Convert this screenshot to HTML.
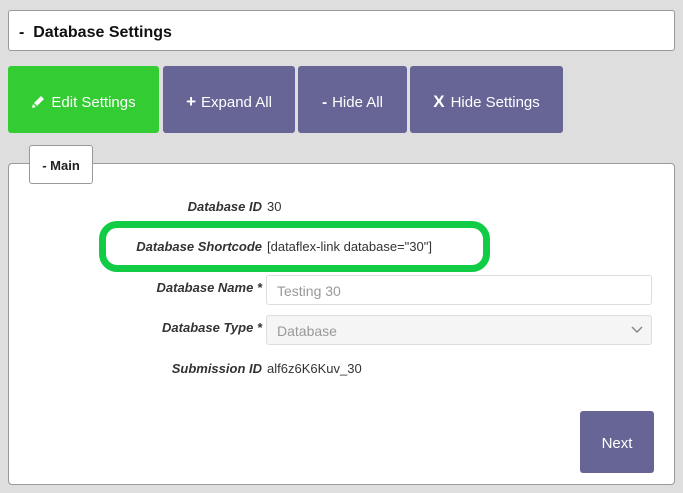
<!DOCTYPE html>
<html><head><style>
*{box-sizing:border-box;margin:0;padding:0}
body{width:683px;height:493px;background:#dedede;font-family:"Liberation Sans",sans-serif;position:relative;overflow:hidden;color:#333}
.a{position:absolute}
.hdr{left:8px;top:10px;width:667px;height:41px;background:#fff;border:1px solid #999;border-radius:3px;font-weight:bold;font-size:16px;color:#111;padding:13px 0 0 10px}
.btn{top:66px;height:67px;color:#fff;font-size:15px;display:flex;align-items:center;justify-content:center;border-radius:3px;background:#666596;padding-top:5px}
.panel{left:8px;top:163px;width:667px;height:322px;background:#fff;border:1px solid #999;border-radius:4px}
.tab{left:29px;top:145px;width:64px;height:39px;background:#fff;border:1px solid #999;border-radius:3px;font-weight:bold;font-size:13px;color:#222;text-align:center;line-height:40px}
.lbl{right:421px;font-weight:bold;font-style:italic;font-size:13px;color:#333;text-align:right;white-space:nowrap}
.val{left:267px;font-size:13px;color:#333;white-space:nowrap}
.inp{left:266px;width:386px;height:30px;border:1px solid #ddd;border-radius:3px;font-size:14px;color:#999;padding:7px 10px}
</style></head><body>
<div class="a hdr">-&nbsp; Database Settings</div>
<div class="a btn" style="left:8px;width:151px;background:#33cc33">
<svg width="16" height="16" viewBox="0 0 16 16" style="margin-right:4px"><path d="M3 9 L10 2 L13 5 L6 12 Z" fill="#fff"/><path d="M2 10 L5 13 L1 14 Z" fill="#fff"/></svg>Edit Settings</div>
<div class="a btn" style="left:163px;width:132px"><b style="margin-right:5px;font-size:17px">+</b>Expand All</div>
<div class="a btn" style="left:298px;width:109px"><b style="margin-right:5px">-</b>Hide All</div>
<div class="a btn" style="left:410px;width:153px"><b style="margin-right:6px;font-size:17px">X</b>Hide Settings</div>
<div class="a panel"></div>
<div class="a tab">- Main</div>
<div class="a lbl" style="top:199px">Database ID</div><div class="a val" style="top:199px">30</div>
<div class="a" style="left:99px;top:221px;width:391px;height:51px;border:7px solid #11cc44;border-radius:18px"></div>
<div class="a lbl" style="top:239px">Database Shortcode</div><div class="a val" style="top:239px">[dataflex-link database="30"]</div>
<div class="a lbl" style="top:280px">Database Name *</div>
<div class="a inp" style="top:275px;background:#fff">Testing 30</div>
<div class="a lbl" style="top:320px">Database Type *</div>
<div class="a inp" style="top:315px;background:#f5f5f5">Database
<svg class="a" style="right:8px;top:10px" width="12" height="8" viewBox="0 0 12 8"><path d="M1 1 L6 6 L11 1" stroke="#888" stroke-width="1.5" fill="none"/></svg></div>
<div class="a lbl" style="top:361px">Submission ID</div><div class="a val" style="top:361px">alf6z6K6Kuv_30</div>
<div class="a" style="left:580px;top:411px;width:74px;height:62px;background:#666596;border-radius:3px;color:#fff;font-size:15px;display:flex;align-items:center;justify-content:center;padding-top:2px">Next</div>
</body></html>
